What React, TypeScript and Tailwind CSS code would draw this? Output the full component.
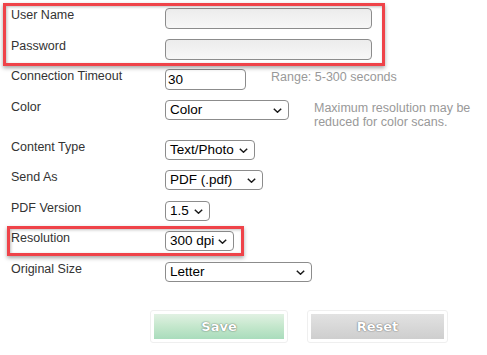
import React from "react";

type Row = {
  label: string;
  height: string;
  kind: "text" | "select";
  value?: string;
  width: string;
  note?: React.ReactNode;
  noteGap?: string;
};

const rows: Row[] = [
  { label: "User Name", height: "h-[31px]", kind: "text", width: "w-[207px]", value: "" },
  { label: "Password", height: "h-[30px]", kind: "text", width: "w-[207px]", value: "" },
  {
    label: "Connection Timeout",
    height: "h-[31px]",
    kind: "text",
    width: "w-[81px]",
    value: "30",
    note: "Range: 5-300 seconds",
    noteGap: "ml-[25px]",
  },
  {
    label: "Color",
    height: "h-[40px]",
    kind: "select",
    width: "w-[124px]",
    value: "Color",
    note: (
      <>
        Maximum resolution may be
        <br />
        reduced for color scans.
      </>
    ),
    noteGap: "ml-[25px]",
  },
  { label: "Content Type", height: "h-[30px]", kind: "select", width: "w-[90px]", value: "Text/Photo" },
  { label: "Send As", height: "h-[31px]", kind: "select", width: "w-[98px]", value: "PDF (.pdf)" },
  { label: "PDF Version", height: "h-[30px]", kind: "select", width: "w-[45px]", value: "1.5" },
  { label: "Resolution", height: "h-[31px]", kind: "select", width: "w-[69px]", value: "300 dpi" },
  { label: "Original Size", height: "h-[30px]", kind: "select", width: "w-[147px]", value: "Letter" },
];

function Chevron() {
  return (
    <svg width="9" height="5" viewBox="0 0 9 5" className="shrink-0">
      <path d="M0.8 0.8 L4.5 4.2 L8.2 0.8" fill="none" stroke="#1a1a1a" strokeWidth="1.5" />
    </svg>
  );
}

function Control({ row }: { row: Row }) {
  if (row.kind === "text") {
    const filled = row.value !== "";
    return (
      <input
        type={row.label === "Password" ? "password" : "text"}
        defaultValue={row.value}
        className={`${row.width} h-[21px] rounded-[4px] border border-[#8c8c8c] px-[2px] text-[13.5px] text-black outline-none ${
          filled ? "bg-white" : "bg-gradient-to-b from-[#ececec] to-[#f7f7f7]"
        }`}
      />
    );
  }
  return (
    <div
      className={`${row.width} h-[20px] rounded-[4px] border border-[#8c8c8c] bg-white pl-[4px] pr-[6px] flex items-center justify-between text-[13.5px] text-black`}
    >
      <span className="leading-[18px] whitespace-nowrap">{row.value}</span>
      <Chevron />
    </div>
  );
}

export default function App() {
  return (
    <div className="relative w-[487px] h-[355px] bg-white overflow-hidden font-['Liberation_Sans',Arial,sans-serif]">
      {/* form rows */}
      <div className="flex flex-col pt-[8px]">
        {rows.map((row) => (
          <div key={row.label} className={`flex items-start ${row.height}`}>
            <div className="w-[165px] pl-[11px] text-[12.5px] leading-[15px] text-[#333]">{row.label}</div>
            <Control row={row} />
            {row.note && (
              <div className={`${row.noteGap} text-[12.5px] leading-[14px] text-[#999] whitespace-nowrap pt-[1px]`}>
                {row.note}
              </div>
            )}
          </div>
        ))}
      </div>

      {/* buttons */}
      <div className="flex gap-[19px] pl-[150px] pt-[18px]">
        <div className="rounded-[3px] border border-[#efefef] p-[3px]">
          <button className="w-[130px] h-[25px] bg-gradient-to-b from-[#e1f1e3] via-[#c4e7cc] to-[#a9dcbc] text-white font-bold text-[13px] font-['DejaVu_Sans',Verdana,sans-serif] [text-shadow:0_0_1px_rgba(0,0,0,0.55),0_0_2px_rgba(0,0,0,0.3)]">
            Save
          </button>
        </div>
        <div className="rounded-[3px] border border-[#efefef] p-[3px]">
          <button className="w-[133px] h-[25px] bg-gradient-to-b from-[#e2e2e2] to-[#cecece] text-white font-bold text-[13px] font-['DejaVu_Sans',Verdana,sans-serif] [text-shadow:0_0_1px_rgba(0,0,0,0.55),0_0_2px_rgba(0,0,0,0.3)]">
            Reset
          </button>
        </div>
      </div>

      {/* highlight annotations */}
      <div className="pointer-events-none absolute left-[3px] top-[3px] w-[382px] h-[63px] border-[3px] border-[#ef4349] shadow-[0_2px_4px_rgba(0,0,0,0.35),inset_1px_1px_3px_rgba(0,0,0,0.25)]" />
      <div className="pointer-events-none absolute left-[7px] top-[226px] w-[237px] h-[30px] border-[3px] border-[#ef4349] shadow-[0_2px_4px_rgba(0,0,0,0.35),inset_1px_1px_3px_rgba(0,0,0,0.25)]" />
    </div>
  );
}
